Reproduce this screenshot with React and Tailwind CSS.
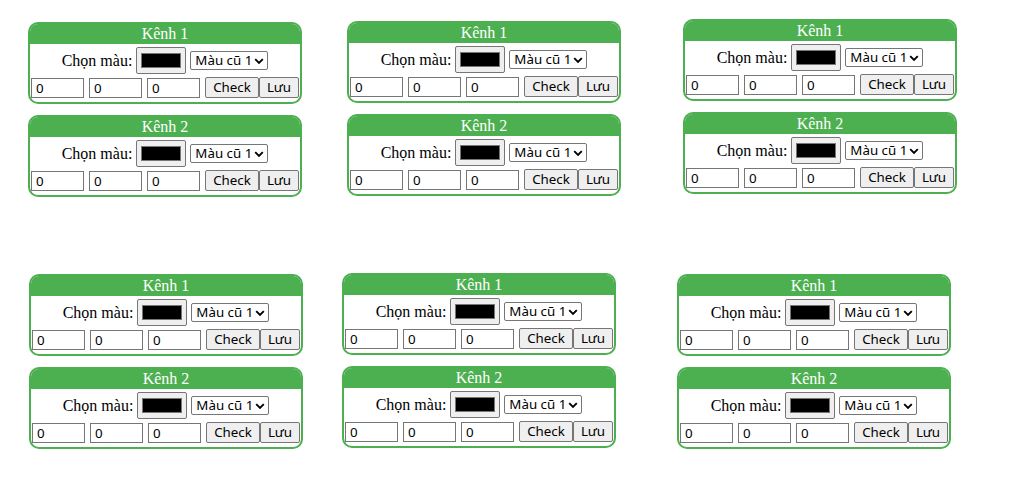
import { useState } from "react";

function Chevron() {
  return (
    <svg
      className="pointer-events-none absolute right-[4px] top-[7px]"
      width="10"
      height="7"
      viewBox="0 0 10 7"
    >
      <path d="M1.2 1.2 L5 5 L8.8 1.2" fill="none" stroke="#000" strokeWidth="1.9" />
    </svg>
  );
}

function ChannelCard({ label }) {
  const [vals, setVals] = useState(["0", "0", "0"]);

  return (
    <div className="w-[274px] h-[82px] border-2 border-[#4caf50] rounded-[10px] overflow-hidden bg-white">
      <div className="h-[20px] bg-[#4caf50] text-white text-center text-[16px] leading-[20px] font-serif">
        {label}
      </div>

      <div className="flex justify-center items-center gap-[4px] mt-[3px] h-[27px]">
        <span className="text-[16px] text-black leading-[20px] font-serif">Chọn màu:</span>
        <label className="w-[50px] h-[27px] bg-[#efefef] border border-[#767676] rounded-[2px] pt-[5px] pl-[4px]">
          <span className="block w-[40px] h-[15px] bg-black border border-[#777777]"></span>
        </label>
        <div className="relative flex">
          <select
            className="appearance-none block w-[78px] h-[19px] border border-[#767676] rounded-[2px] bg-white pl-[4px] text-[13.33px] leading-[17px] text-black"
            defaultValue="1"
          >
            <option value="1">Màu cũ 1</option>
            <option value="2">Màu cũ 2</option>
            <option value="3">Màu cũ 3</option>
          </select>
          <Chevron />
        </div>
      </div>

      <div className="flex justify-center items-center gap-[5px] mt-[3px] h-[21px]">
        {vals.map((v, i) => (
          <input
            key={i}
            type="text"
            value={v}
            onChange={(ev) => {
              const next = [...vals];
              next[i] = ev.target.value;
              setVals(next);
            }}
            className="w-[53px] h-[20px] border border-[#767676] bg-white pl-[4px] text-[13.33px] text-black outline-none"
          />
        ))}
        <div className="flex">
          <button className="w-[54px] h-[21px] bg-[#efefef] border border-[#767676] rounded-[2px] text-[13.33px] text-black">
            Check
          </button>
          <button className="w-[40px] h-[21px] bg-[#efefef] border border-[#767676] rounded-[2px] text-[13.33px] text-black">
            Lưu
          </button>
        </div>
      </div>
    </div>
  );
}

function Column({ className }) {
  return (
    <div className={`flex flex-col gap-[11px] ${className}`}>
      <ChannelCard label="Kênh 1" />
      <ChannelCard label="Kênh 2" />
    </div>
  );
}

export default function App() {
  return (
    <div className="w-[1024px] h-[500px] bg-white overflow-hidden pt-[19px] [--font-serif:'Liberation_Serif',serif]">
      <div className="flex items-start pl-[28px]">
        <Column className="mt-[3px]" />
        <Column className="mt-[2px] ml-[45px]" />
        <Column className="ml-[62px]" />
      </div>
      <div className="flex items-start pl-[29px] mt-[76px]">
        <Column className="mt-[1px]" />
        <Column className="ml-[39px]" />
        <Column className="mt-[1px] ml-[61px]" />
      </div>
    </div>
  );
}
